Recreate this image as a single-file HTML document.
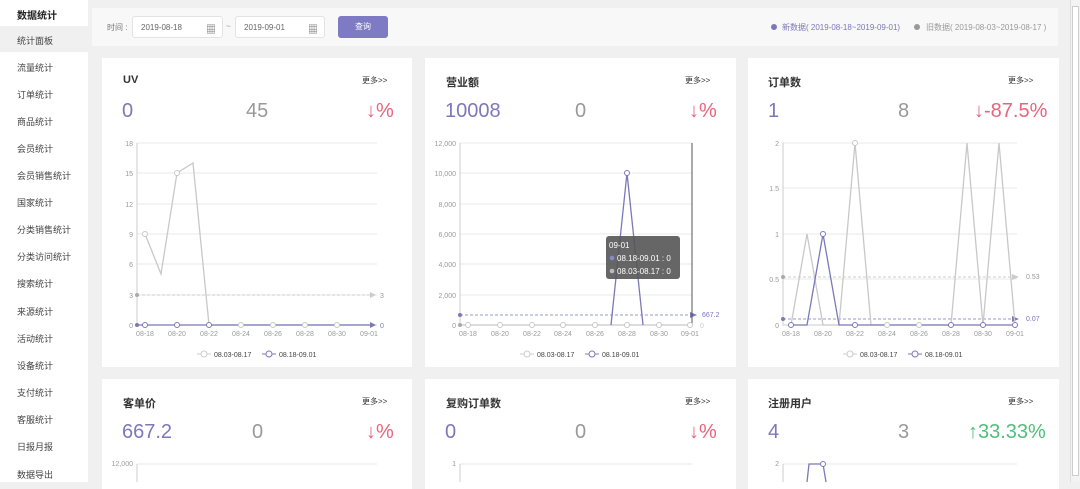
<!DOCTYPE html>
<html><head><meta charset="utf-8"><style>
*{margin:0;padding:0;box-sizing:border-box}
body{width:1080px;height:482px;overflow:hidden;background:#f0f0f0;font-family:"Liberation Sans","Noto Sans CJK SC",sans-serif;position:relative;color:#333}
.a{position:absolute;white-space:nowrap}
#side{position:absolute;left:0;top:0;width:88px;height:482px;background:#fff}
.si{position:absolute;left:17px;font-size:9px;color:#444}
.card{position:absolute;background:#fff}
.t{font-size:11px;font-weight:bold;color:#333}
.more{font-size:8px;color:#333}
.v{font-size:20px}
.p{color:#7b78bb}.g{color:#999}.r{color:#e8647e}.gr{color:#4fbf7a}
.inp{position:absolute;top:16px;height:22px;background:#fff;border:1px solid #e3e3e3;border-radius:3px;font-size:8px;color:#666;padding:6px 8px}
svg text{font-family:"Liberation Sans",sans-serif}
</style></head><body>
<div id="side">
<div class="si" style="top:7px;font-weight:bold;color:#222;font-size:10px">数据统计</div>
<div style="position:absolute;top:26px;left:0;width:88px;height:26px;background:#f0f0f0"></div>
<div class="si" style="top:34px">统计面板</div>
<div class="si" style="top:61px">流量统计</div>
<div class="si" style="top:88px">订单统计</div>
<div class="si" style="top:115px">商品统计</div>
<div class="si" style="top:142px">会员统计</div>
<div class="si" style="top:169px">会员销售统计</div>
<div class="si" style="top:196px">国家统计</div>
<div class="si" style="top:223px">分类销售统计</div>
<div class="si" style="top:250px">分类访问统计</div>
<div class="si" style="top:277px">搜索统计</div>
<div class="si" style="top:305px">来源统计</div>
<div class="si" style="top:332px">活动统计</div>
<div class="si" style="top:359px">设备统计</div>
<div class="si" style="top:386px">支付统计</div>
<div class="si" style="top:413px">客服统计</div>
<div class="si" style="top:440px">日报月报</div>
<div class="si" style="top:468px">数据导出</div>
</div>
<div style="position:absolute;left:1070px;top:0;width:10px;height:482px;background:#f3f3f3;border-left:1px solid #ddd"></div>
<div style="position:absolute;left:1072px;top:6px;width:7px;height:470px;background:#fff;border:1px solid #ccc"></div>

<div style="position:absolute;left:92px;top:8px;width:966px;height:38px;background:#f8f8f8"></div>
<div class="a" style="left:107px;top:22px;font-size:8px;color:#777">时间 :</div>
<div class="inp" style="left:132px;width:91px">2019-08-18</div>
<div class="a" style="left:206px;top:21px;font-size:10px;color:#666">&#9638;</div>
<div class="a" style="left:226px;top:22px;font-size:8px;color:#999">~</div>
<div class="inp" style="left:235px;width:90px">2019-09-01</div>
<div class="a" style="left:308px;top:21px;font-size:10px;color:#666">&#9638;</div>
<div style="position:absolute;left:338px;top:16px;width:50px;height:22px;background:#7e7bc4;border-radius:3px;color:#fff;font-size:8px;text-align:center;line-height:22px">查询</div>
<div class="a" style="left:771px;top:24px;width:6px;height:6px;border-radius:50%;background:#7b78bb"></div>
<div class="a" style="left:782px;top:22px;font-size:8px;color:#7b78bb">新数据( 2019-08-18~2019-09-01)</div>
<div class="a" style="left:914px;top:24px;width:6px;height:6px;border-radius:50%;background:#999"></div>
<div class="a" style="left:926px;top:22px;font-size:8px;color:#999">旧数据( 2019-08-03~2019-08-17 )</div>

<div class="card" style="left:102px;top:58px;width:310px;height:309px"></div>
<div class="card" style="left:425px;top:58px;width:311px;height:309px"></div>
<div class="card" style="left:748px;top:58px;width:311px;height:309px"></div>
<div class="card" style="left:102px;top:379px;width:310px;height:110px"></div>
<div class="card" style="left:425px;top:379px;width:311px;height:110px"></div>
<div class="card" style="left:748px;top:379px;width:311px;height:110px"></div>

<div class="a t" style="left:123px;top:74px">UV</div><div class="a more" style="left:362px;top:75px">更多&gt;&gt;</div>
<div class="a v p" style="left:122px;top:100px">0</div><div class="a v g" style="left:246px;top:100px">45</div><div class="a v r" style="left:366px;top:100px">↓%</div>
<div class="a t" style="left:446px;top:74px">营业额</div><div class="a more" style="left:685px;top:75px">更多&gt;&gt;</div>
<div class="a v p" style="left:445px;top:100px">10008</div><div class="a v g" style="left:575px;top:100px">0</div><div class="a v r" style="left:689px;top:100px">↓%</div>
<div class="a t" style="left:768px;top:74px">订单数</div><div class="a more" style="left:1008px;top:75px">更多&gt;&gt;</div>
<div class="a v p" style="left:768px;top:100px">1</div><div class="a v g" style="left:898px;top:100px">8</div><div class="a v r" style="left:974px;top:100px">↓-87.5%</div>

<div class="a t" style="left:123px;top:395px">客单价</div><div class="a more" style="left:362px;top:396px">更多&gt;&gt;</div>
<div class="a v p" style="left:122px;top:421px">667.2</div><div class="a v g" style="left:252px;top:421px">0</div><div class="a v r" style="left:366px;top:421px">↓%</div>
<div class="a t" style="left:446px;top:395px">复购订单数</div><div class="a more" style="left:685px;top:396px">更多&gt;&gt;</div>
<div class="a v p" style="left:445px;top:421px">0</div><div class="a v g" style="left:575px;top:421px">0</div><div class="a v r" style="left:689px;top:421px">↓%</div>
<div class="a t" style="left:768px;top:395px">注册用户</div><div class="a more" style="left:1008px;top:396px">更多&gt;&gt;</div>
<div class="a v p" style="left:768px;top:421px">4</div><div class="a v g" style="left:898px;top:421px">3</div><div class="a v gr" style="left:968px;top:421px">↑33.33%</div>

<svg class="a" style="left:0;top:0" width="1080" height="482" font-size="7" fill="#999">
<g stroke="#e8e8e8" stroke-width="1" fill="none">
<path d="M137 143H377M137 173H377M137 204H377M137 234H377M137 264H377M137 295H377"/>
<path d="M460 143H692M460 173H692M460 204H692M460 234H692M460 264H692M460 295H692"/>
<path d="M783 143H1017M783 188H1017M783 234H1017M783 279H1017"/>
<path d="M137 464H377M460 464H692M783 464H1017"/>
</g>
<g stroke="#ccc" fill="none"><path d="M137 143V325H377M460 143V325H692M783 143V325H1017M137 464V482M460 464V482M783 464V482"/></g>
<g text-anchor="end">
<text x="133" y="146">18</text><text x="133" y="176">15</text><text x="133" y="207">12</text><text x="133" y="237">9</text><text x="133" y="267">6</text><text x="133" y="298">3</text><text x="133" y="328">0</text>
<text x="456" y="146">12,000</text><text x="456" y="176">10,000</text><text x="456" y="207">8,000</text><text x="456" y="237">6,000</text><text x="456" y="267">4,000</text><text x="456" y="298">2,000</text><text x="456" y="328">0</text>
<text x="779" y="146">2</text><text x="779" y="191">1.5</text><text x="779" y="237">1</text><text x="779" y="282">0.5</text><text x="779" y="328">0</text>
<text x="133" y="466">12,000</text><text x="456" y="466">1</text><text x="779" y="466">2</text>
</g>
<g text-anchor="middle">
<text x="145" y="336">08-18</text><text x="177" y="336">08-20</text><text x="209" y="336">08-22</text><text x="241" y="336">08-24</text><text x="273" y="336">08-26</text><text x="305" y="336">08-28</text><text x="337" y="336">08-30</text><text x="369" y="336">09-01</text>
<text x="468" y="336">08-18</text><text x="500" y="336">08-20</text><text x="532" y="336">08-22</text><text x="563" y="336">08-24</text><text x="595" y="336">08-26</text><text x="627" y="336">08-28</text><text x="659" y="336">08-30</text><text x="690" y="336">09-01</text>
<text x="791" y="336">08-18</text><text x="823" y="336">08-20</text><text x="855" y="336">08-22</text><text x="887" y="336">08-24</text><text x="919" y="336">08-26</text><text x="951" y="336">08-28</text><text x="983" y="336">08-30</text><text x="1015" y="336">09-01</text>
</g>
<!-- UV -->
<path d="M137 295H372" stroke="#ccc" stroke-dasharray="3,2" fill="none"/><path d="M370 292l6 3-6 3z" fill="#ccc"/><text x="380" y="298">3</text>
<polyline points="145,234 161,274 177,173 193,163 209,325 369,325" fill="none" stroke="#c8c8c8" stroke-width="1.3"/>
<path d="M137 325H372" stroke="#7b78bb" stroke-width="1.3" fill="none"/><path d="M370 322l6 3-6 3z" fill="#7b78bb"/><text x="380" y="328" fill="#7b78bb">0</text>
<g fill="#fff" stroke="#c8c8c8"><circle cx="145" cy="234" r="2.5"/><circle cx="177" cy="173" r="2.5"/><circle cx="241" cy="325" r="2.5"/><circle cx="273" cy="325" r="2.5"/><circle cx="305" cy="325" r="2.5"/><circle cx="337" cy="325" r="2.5"/></g>
<g fill="#fff" stroke="#7b78bb"><circle cx="145" cy="325" r="2.5"/><circle cx="177" cy="325" r="2.5"/><circle cx="209" cy="325" r="2.5"/></g>
<circle cx="137" cy="325" r="2" fill="#7b78bb"/><circle cx="137" cy="295" r="2" fill="#aaa"/>
<!-- revenue -->
<path d="M460 315H690" stroke="#7b78bb" stroke-dasharray="3,2" stroke-width=".8" fill="none"/><path d="M690 312l7 3-7 3z" fill="#7b78bb"/><text x="702" y="317" fill="#7b78bb">667.2</text>
<path d="M692 143V325" stroke="#555" fill="none"/>
<path d="M460 325H692" stroke="#c8c8c8" stroke-width="1.3" fill="none"/>
<polyline points="611,325 627,173 643,325" fill="none" stroke="#7b78bb" stroke-width="1.3"/>
<g fill="#fff" stroke="#c8c8c8"><circle cx="468" cy="325" r="2.5"/><circle cx="500" cy="325" r="2.5"/><circle cx="532" cy="325" r="2.5"/><circle cx="563" cy="325" r="2.5"/><circle cx="595" cy="325" r="2.5"/><circle cx="627" cy="325" r="2.5"/><circle cx="659" cy="325" r="2.5"/><circle cx="690" cy="325" r="2.5"/></g>
<circle cx="627" cy="173" r="2.5" fill="#fff" stroke="#7b78bb"/><circle cx="460" cy="315" r="2" fill="#7b78bb"/><circle cx="460" cy="325" r="2" fill="#aaa"/><text x="700" y="328" fill="#ccc">0</text>
<rect x="606" y="236" width="74" height="43" rx="3" fill="#555" opacity=".9"/>
<g fill="#fff" font-size="8"><text x="609" y="248">09-01</text><text x="617" y="261">08.18-09.01 : 0</text><text x="617" y="274">08.03-08.17 : 0</text></g>
<circle cx="612" cy="258" r="2.3" fill="#8a87d0"/><circle cx="612" cy="271" r="2.3" fill="#bbb"/>
<!-- orders -->
<path d="M783 277H1012" stroke="#ccc" stroke-dasharray="3,2" fill="none"/><path d="M1012 274l7 3-7 3z" fill="#ccc"/><text x="1026" y="279">0.53</text>
<path d="M783 319H1012" stroke="#7b78bb" stroke-dasharray="3,2" stroke-width=".8" fill="none"/><path d="M1012 316l7 3-7 3z" fill="#7b78bb"/><text x="1026" y="321" fill="#7b78bb">0.07</text>
<polyline points="791,325 807,234 823,325 839,325 855,143 871,325 951,325 967,143 983,325 999,143 1015,325" fill="none" stroke="#c8c8c8" stroke-width="1.3"/>
<polyline points="791,325 807,325 823,234 839,325 1015,325" fill="none" stroke="#7b78bb" stroke-width="1.3"/>
<g fill="#fff" stroke="#c8c8c8"><circle cx="855" cy="143" r="2.5"/><circle cx="887" cy="325" r="2.5"/><circle cx="919" cy="325" r="2.5"/></g>
<g fill="#fff" stroke="#7b78bb"><circle cx="791" cy="325" r="2.5"/><circle cx="823" cy="234" r="2.5"/><circle cx="855" cy="325" r="2.5"/><circle cx="951" cy="325" r="2.5"/><circle cx="983" cy="325" r="2.5"/><circle cx="1015" cy="325" r="2.5"/></g>
<circle cx="783" cy="319" r="2" fill="#7b78bb"/><circle cx="783" cy="277" r="2" fill="#aaa"/>
<!-- bottom -->
<polyline points="807,482 809,464 823,464 826,482" fill="none" stroke="#7b78bb" stroke-width="1.3"/><circle cx="823" cy="464" r="2.5" fill="#fff" stroke="#7b78bb"/>
<!-- legends -->
<g font-size="7" fill="#444">
<path d="M197 354H211M520 354H534M843 354H857" stroke="#ccc" fill="none"/>
<circle cx="204" cy="354" r="3" fill="#fff" stroke="#ccc"/><circle cx="527" cy="354" r="3" fill="#fff" stroke="#ccc"/><circle cx="850" cy="354" r="3" fill="#fff" stroke="#ccc"/>
<text x="214" y="357">08.03-08.17</text><text x="537" y="357">08.03-08.17</text><text x="860" y="357">08.03-08.17</text>
<path d="M262 354H276M585 354H599M908 354H922" stroke="#7b78bb" fill="none"/>
<circle cx="269" cy="354" r="3" fill="#fff" stroke="#7b78bb"/><circle cx="592" cy="354" r="3" fill="#fff" stroke="#7b78bb"/><circle cx="915" cy="354" r="3" fill="#fff" stroke="#7b78bb"/>
<text x="279" y="357">08.18-09.01</text><text x="602" y="357">08.18-09.01</text><text x="925" y="357">08.18-09.01</text>
</g>
</svg>
</body></html>
